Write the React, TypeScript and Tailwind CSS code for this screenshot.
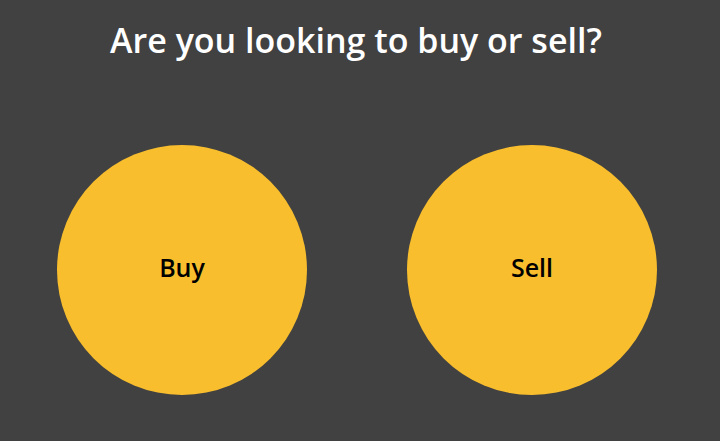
import React from "react";

export default function App() {
  return (
    <div className="w-[720px] h-[441px] bg-[#414141] flex flex-col overflow-hidden font-['Open_Sans',sans-serif]">
      <h1 className="text-white text-[34px] font-semibold text-center leading-[40px] mt-[20px] pr-[8px]">
        Are you looking to buy or sell?
      </h1>
      <div className="flex flex-row gap-[100px] pl-[57px] mt-[85px]">
        <button className="w-[250px] h-[250px] rounded-full bg-[#f8be2e] flex items-center justify-center text-black text-[25px] font-semibold pb-[4px]">
          Buy
        </button>
        <button className="w-[250px] h-[250px] rounded-full bg-[#f8be2e] flex items-center justify-center text-black text-[25px] font-semibold pb-[4px]">
          Sell
        </button>
      </div>
    </div>
  );
}
